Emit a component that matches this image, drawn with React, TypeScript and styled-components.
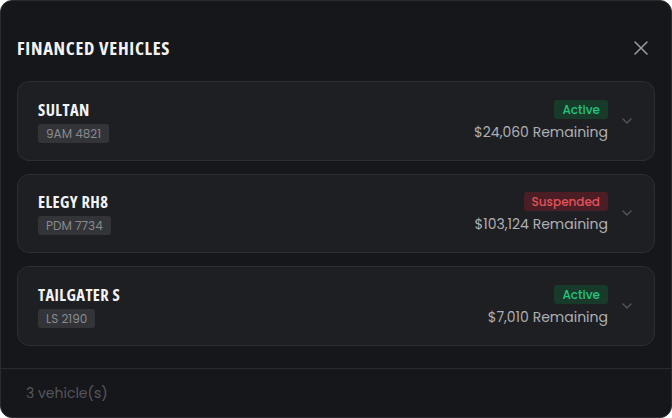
import React from "react";
import styled, { createGlobalStyle } from "styled-components";

const Global = createGlobalStyle`
  html, body { margin: 0; padding: 0; background: #ffffff; }
  body { font-family: "Poppins", "Inter", "Noto Sans", sans-serif; }
  * { box-sizing: border-box; }
`;

const Panel = styled.div`
  width: 672px;
  height: 418px;
  background: #16171b;
  border: 1px solid #2a2b30;
  border-radius: 12px;
  display: flex;
  flex-direction: column;
  overflow: hidden;
`;

const Header = styled.div`
  display: flex;
  align-items: center;
  justify-content: space-between;
  padding: 14px 22px 0 16px;
  height: 80px;
  flex-shrink: 0;
`;

const Title = styled.h2`
  margin: 0;
  font-family: "Open Sans", "Noto Sans", sans-serif;
  font-stretch: 75%;
  font-weight: 700;
  font-size: 18.5px;
  letter-spacing: 0.7px;
  color: #f3f3f4;
  line-height: 24px;
`;

const CloseButton = styled.button`
  background: none;
  border: none;
  padding: 0;
  width: 16px;
  height: 16px;
  display: flex;
  align-items: center;
  justify-content: center;
  cursor: pointer;
`;

const List = styled.div`
  flex: 1;
  display: flex;
  flex-direction: column;
  gap: 13px;
  padding: 0 16px;
`;

const Card = styled.div`
  height: 79.5px;
  background: #1e1f23;
  border: 1px solid #2d2e33;
  border-radius: 12px;
  display: flex;
  align-items: center;
  padding: 0 22px 0 20px;
`;

const Left = styled.div`
  flex: 1;
  display: flex;
  flex-direction: column;
  align-items: flex-start;
  gap: 3px;
`;

const Name = styled.div`
  font-family: "Open Sans", "Noto Sans", sans-serif;
  font-stretch: 75%;
  font-weight: 700;
  font-size: 16.5px;
  letter-spacing: 0.4px;
  line-height: 22px;
  color: #f3f3f4;
`;

const Plate = styled.div`
  background: #333438;
  color: #88898e;
  font-size: 12px;
  line-height: 19px;
  padding: 0 8px;
  border-radius: 3px;
`;

const Right = styled.div`
  display: flex;
  flex-direction: column;
  align-items: flex-end;
  gap: 3px;
`;

const Badge = styled.div<{ $tone: "green" | "red" }>`
  font-size: 12px;
  font-weight: 500;
  line-height: 19px;
  padding: 0 8px;
  border-radius: 3px;
  color: ${(p) => (p.$tone === "green" ? "#24c47e" : "#e0525c")};
  background: ${(p) => (p.$tone === "green" ? "#173a2b" : "#4a1e24")};
`;

const Remaining = styled.div`
  font-size: 14px;
  line-height: 20px;
  color: #aeafb3;
`;

const Chevron = styled.div`
  width: 10px;
  margin-left: 14px;
  display: flex;
  align-items: center;
  justify-content: center;
`;

const Footer = styled.div`
  height: 49px;
  flex-shrink: 0;
  border-top: 1px solid #2a2b30;
  display: flex;
  align-items: center;
  padding: 0 25px;
  font-size: 14px;
  color: #55565b;
`;

type Vehicle = { name: string; plate: string; status: "Active" | "Suspended"; remaining: string };

const vehicles: Vehicle[] = [
  { name: "SULTAN", plate: "9AM 4821", status: "Active", remaining: "$24,060" },
  { name: "ELEGY RH8", plate: "PDM 7734", status: "Suspended", remaining: "$103,124" },
  { name: "TAILGATER S", plate: "LS 2190", status: "Active", remaining: "$7,010" },
];

export default function App() {
  return (
    <>
      <Global />
      <Panel>
        <Header>
          <Title>FINANCED VEHICLES</Title>
          <CloseButton aria-label="Close">
            <svg width="14" height="14" viewBox="0 0 14 14" fill="none">
              <path d="M1 1L13 13M13 1L1 13" stroke="#9b9ca0" strokeWidth="1.5" strokeLinecap="round" />
            </svg>
          </CloseButton>
        </Header>
        <List>
          {vehicles.map((v) => (
            <Card key={v.name}>
              <Left>
                <Name>{v.name}</Name>
                <Plate>{v.plate}</Plate>
              </Left>
              <Right>
                <Badge $tone={v.status === "Active" ? "green" : "red"}>{v.status}</Badge>
                <Remaining>{v.remaining} Remaining</Remaining>
              </Right>
              <Chevron>
                <svg width="10" height="6" viewBox="0 0 10 6" fill="none">
                  <path d="M1 1L5 5L9 1" stroke="#55565b" strokeWidth="1.3" strokeLinecap="round" strokeLinejoin="round" />
                </svg>
              </Chevron>
            </Card>
          ))}
        </List>
        <Footer>3 vehicle(s)</Footer>
      </Panel>
    </>
  );
}
